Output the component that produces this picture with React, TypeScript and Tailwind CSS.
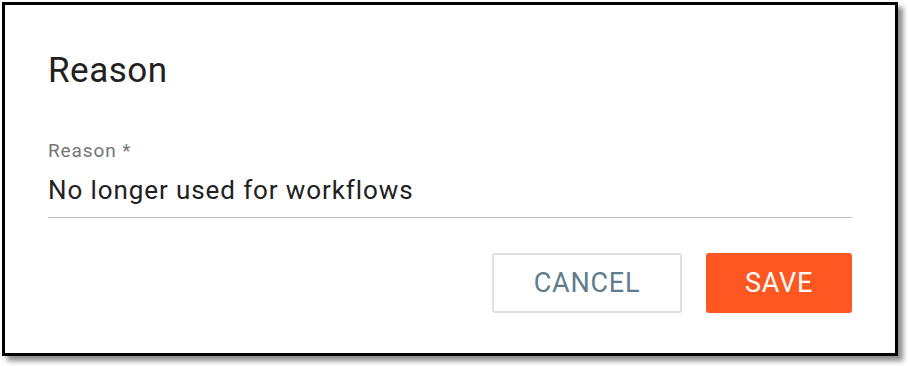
export default function App() {
  return (
    <div className="w-[908px] h-[366px] bg-white pl-[2px] pt-[2px]" style={{ fontFamily: "Roboto, 'Liberation Sans', sans-serif" }}>
      <div className="w-[896px] h-[354px] border-[3px] border-black bg-white shadow-[5px_5px_5px_rgba(0,0,0,0.45)] flex flex-col pl-[43px] pr-[43px]">
        <div className="pt-[46px] text-[35px] leading-[40px] tracking-[0.5px] text-[#212121]">Reason</div>
        <div className="mt-[50px] text-[19px] leading-[20px] tracking-[0.9px] text-[#757575]">Reason *</div>
        <div className="mt-[15px] text-[26px] leading-[28px] tracking-[0.9px] text-[#212121]">No longer used for workflows</div>
        <div className="mt-[13px] h-px bg-[#bdbdbd]" />
        <div className="mt-[35px] flex justify-end gap-[24px]">
          <button className="w-[190px] h-[60px] border-2 border-[#e0e0e0] rounded-[3px] text-[27px] tracking-[0.8px] text-[#607d8b] bg-white">CANCEL</button>
          <button className="w-[146px] h-[60px] rounded-[3px] text-[27px] tracking-[0.8px] text-white bg-[#ff5722]">SAVE</button>
        </div>
      </div>
    </div>
  );
}
